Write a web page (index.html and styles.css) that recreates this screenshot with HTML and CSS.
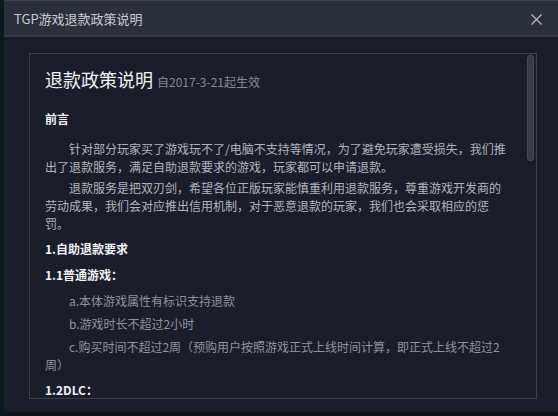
FILE: index.html
```html
<!DOCTYPE html>
<html>
  <head>
    <title>TGP游戏退款政策说明</title>
    <link rel="stylesheet" href="styles.css">
  </head>
  <body>
    <div class="page">
      <div class="side"></div>
      <div class="dialog">
        <div class="titlebar">
          <span class="title">TGP游戏退款政策说明</span>
          <span class="close">
            <svg width="11" height="11" viewBox="0 0 11 11">
              <path d="M0.5 0.5 L10.5 10.5 M10.5 0.5 L0.5 10.5" stroke="#b9bcc4" stroke-width="1.2" fill="none"/>
            </svg>
          </span>
        </div>
        <div class="body">
          <div class="policy">
            <div class="scroll-thumb"></div>
            <h1 class="heading">退款政策说明 <span class="date">自2017-3-21起生效</span></h1>
            <p class="sec intro">前言</p>
            <p class="para">针对部分玩家买了游戏玩不了/电脑不支持等情况，为了避免玩家遭受损失，我们推出了退款服务，满足自助退款要求的游戏，玩家都可以申请退款。</p>
            <p class="para">退款服务是把双刃剑，希望各位正版玩家能慎重利用退款服务，尊重游戏开发商的劳动成果，我们会对应推出信用机制，对于恶意退款的玩家，我们也会采取相应的惩罚。</p>
            <p class="sec">1.自助退款要求</p>
            <p class="sec">1.1普通游戏：</p>
            <p class="item">a.本体游戏属性有标识支持退款</p>
            <p class="item">b.游戏时长不超过2小时</p>
            <p class="item">c.购买时间不超过2周（预购用户按照游戏正式上线时间计算，即正式上线不超过2周）</p>
            <p class="sec">1.2DLC：</p>
          </div>
        </div>
      </div>
    </div>
  </body>
</html>
```

FILE: styles.css
```css
html, body {
  margin: 0;
  padding: 0;
  background: #0d1619;
}
.page {
  display: flex;
  width: 558px;
  height: 416px;
  overflow: hidden;
  font-family: "Noto Sans CJK SC", "Liberation Sans", sans-serif;
}
.side {
  width: 4px;
  background: #0c1a1b;
}
.dialog {
  flex: 1;
  display: flex;
  flex-direction: column;
  height: 411px;
  background: #1b1e2a;
  border-top: 1px solid #3b404c;
  border-bottom: 1px solid #12161e;
}
.titlebar {
  height: 34px;
  display: flex;
  align-items: center;
  justify-content: space-between;
  padding: 0 16px 0 10px;
  background: #2c303b;
  border-bottom: 2px solid #353a47;
}
.title {
  color: #c9cbd0;
  font-size: 13px;
}
.close {
  display: flex;
  margin-top: 2px;
}
.body {
  flex: 1;
  padding: 16px 21px 0 25px;
}
.policy {
  position: relative;
  box-sizing: border-box;
  height: 346px;
  overflow: hidden;
  border: 1px solid #3c404d;
  padding: 13px 25px 0 15px;
}
.scroll-thumb {
  position: absolute;
  top: 1px;
  right: 2px;
  width: 5px;
  height: 104px;
  background: #373b48;
  border: 1px solid #454a58;
  border-radius: 3px;
}
.heading {
  margin: 0 0 16px;
  font-size: 18px;
  font-weight: normal;
  line-height: 24px;
  color: #f1f2f4;
}
.date {
  font-size: 12px;
  color: #858893;
}
p {
  margin: 0;
  font-size: 12px;
  line-height: 18px;
}
.sec {
  margin: 7px 0 8px;
  font-weight: bold;
  color: #f0f1f3;
}
.sec.intro {
  margin-bottom: 12px;
}
.para {
  margin-bottom: 3px;
  text-indent: 24px;
  color: #b2b4ba;
}
.item {
  margin-bottom: 5px;
  text-indent: 24px;
  color: #8f929b;
}
```
